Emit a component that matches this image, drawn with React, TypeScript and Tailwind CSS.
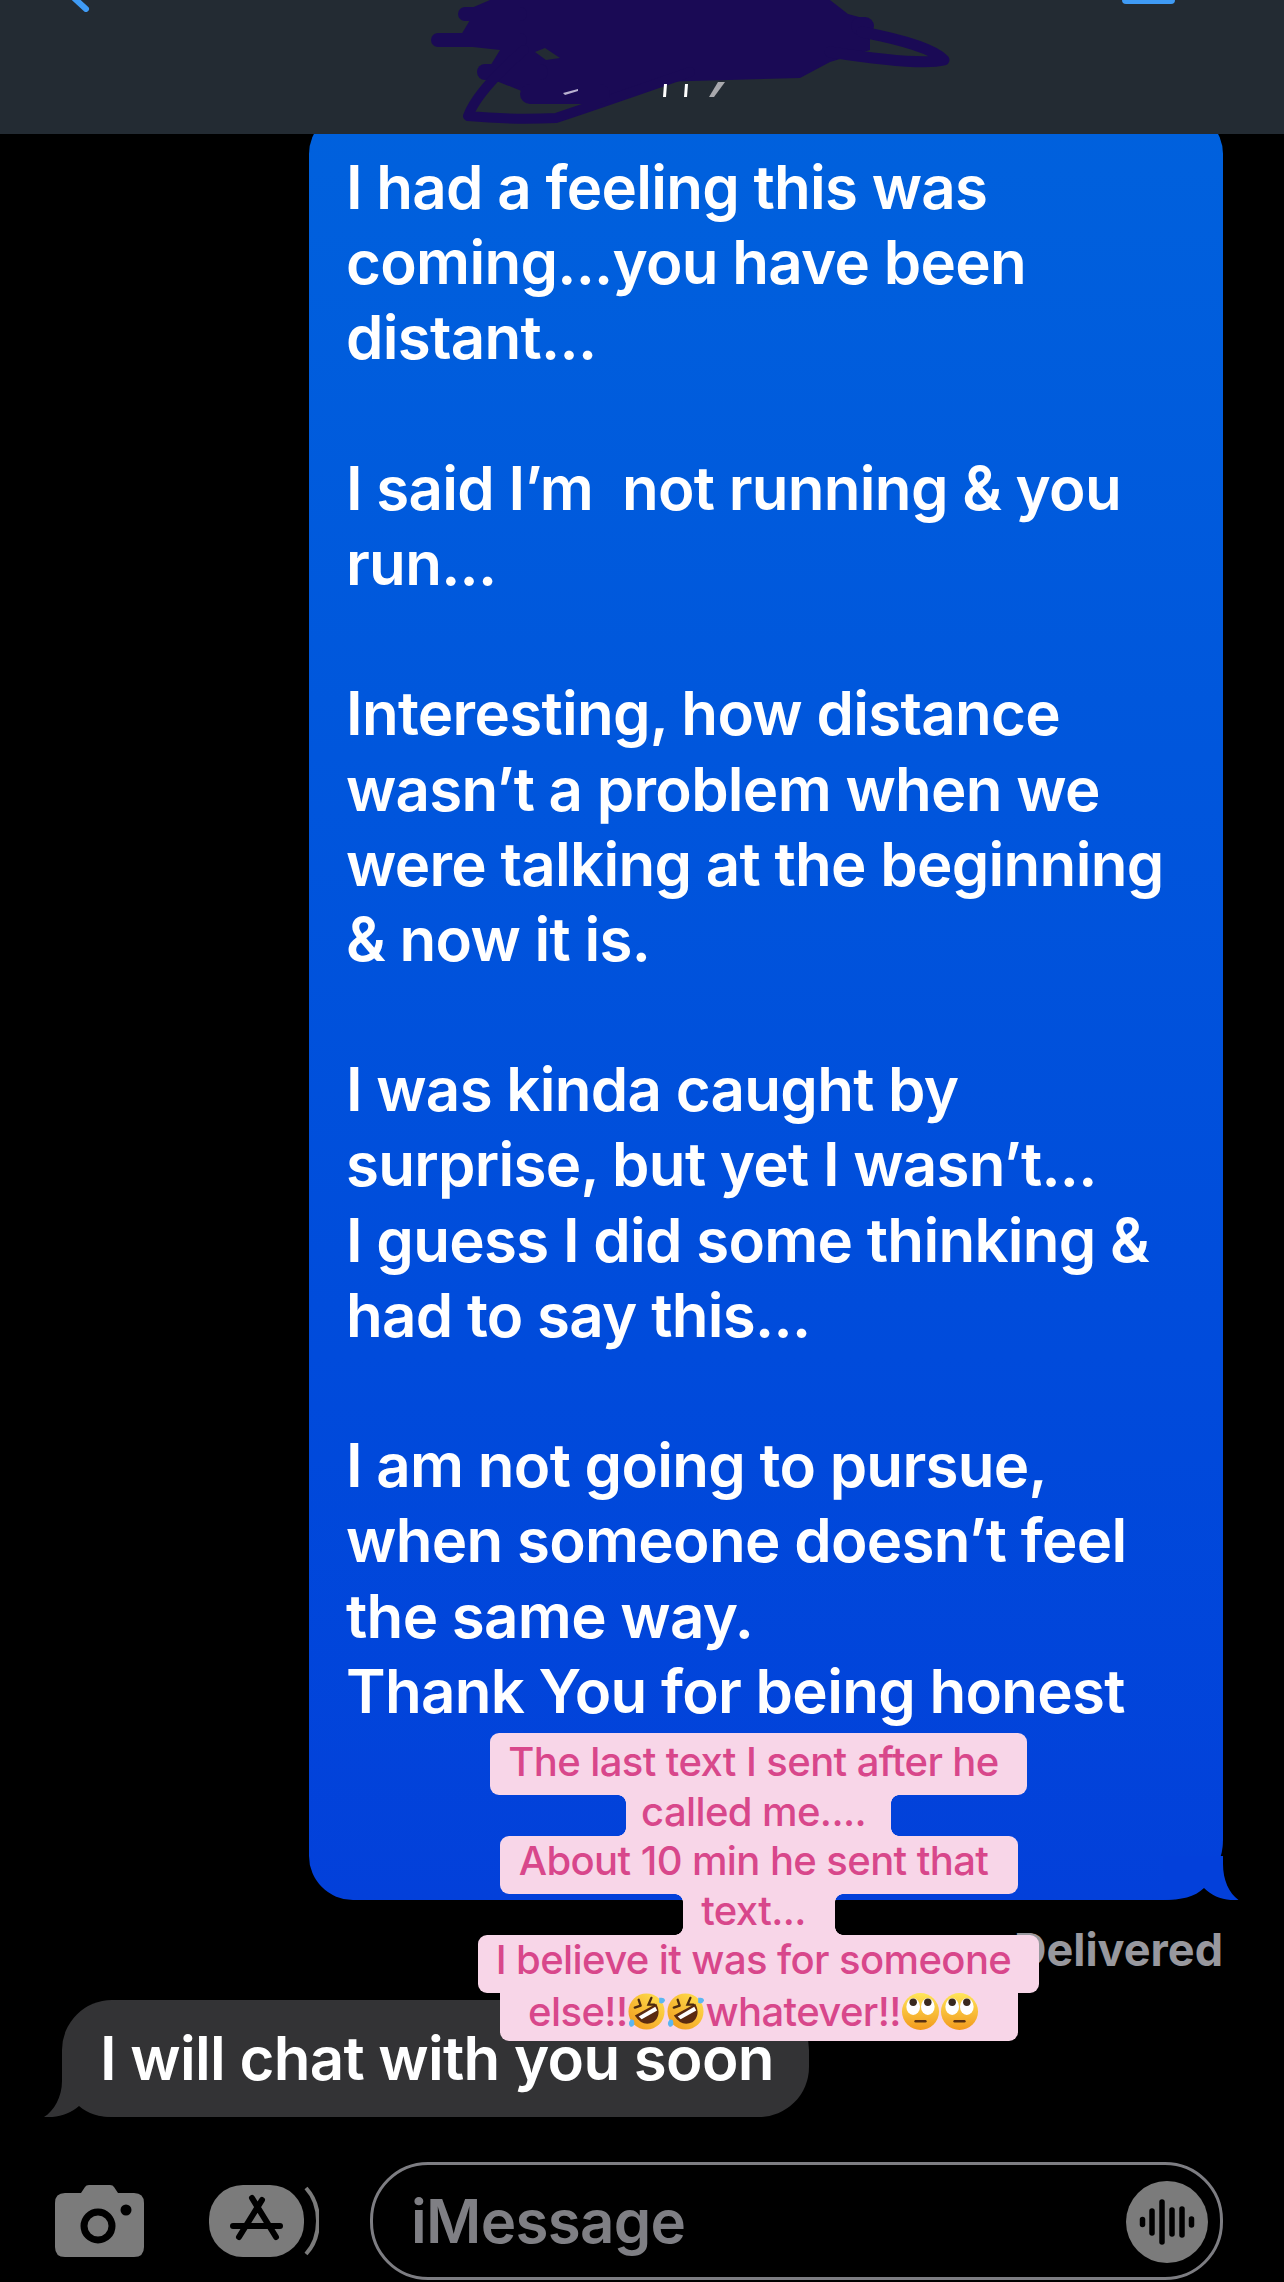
const BUBBLE_LINES = [
  "I had a feeling this was",
  "coming...you have been",
  "distant...",
  "",
  "I said I’m  not running & you",
  "run...",
  "",
  "Interesting, how distance",
  "wasn’t a problem when we",
  "were talking at the beginning",
  "& now it is.",
  "",
  "I was kinda caught by",
  "surprise, but yet I wasn’t...",
  "I guess I did some thinking &",
  "had to say this...",
  "",
  "I am not going to pursue,",
  "when someone doesn’t feel",
  "the same way.",
  "Thank You for being honest",
];

function Scribble() {
  return (
    <svg className="absolute left-[420px] top-0" width="540" height="134" viewBox="420 0 540 134" fill="none">
      <path d="M490 0 H830 L848 14 L870 20 V50 L830 62 L800 78 L655 82 L620 98 L560 100 L524 92 L484 76 L500 50 L455 45 L470 20 L462 12 Z" fill="#1a0a55" />
      <g stroke="#1a0a55" strokeLinecap="round" strokeLinejoin="round" fill="none">
        <path d="M438 40 H520" strokeWidth="14" />
        <path d="M465 14 H520" strokeWidth="14" />
        <path d="M485 72 H540" strokeWidth="16" />
        <path d="M860 26 H865" strokeWidth="18" />
        <path d="M524 50 Q478 90 468 116 Q510 120 556 118 Q610 100 690 72" strokeWidth="10" />
        <path d="M862 32 Q930 45 944 60 Q920 66 830 52" strokeWidth="11" />
        <path d="M530 94 H600" strokeWidth="20" />
      </g>
      <path d="M535 52 L546 60 L560 58 L545 48 Z" fill="#232b33" />
      <path d="M563 93 L578 89 L578 91 L565 95 Z" fill="#b9b2d0" />
      <path d="M664 84 h3 l-1 13 h-3 Z M685 84 h3 l-1 13 h-3 Z" fill="#ffffff" />
      <path d="M725 82 l-11 15 h-5 l9 -15 Z" fill="#a8a8ac" />
    </svg>
  );
}

function Rofl() {
  return (
    <svg width="39" height="39" viewBox="0 0 40 40" className="inline-block shrink-0">
      <defs>
        <linearGradient id="rofl" x1="0.9" y1="0" x2="0.1" y2="1">
          <stop offset="0" stopColor="#ffe04e" />
          <stop offset="1" stopColor="#f19a1c" />
        </linearGradient>
      </defs>
      <circle cx="20" cy="20" r="18.5" fill="url(#rofl)" />
      <path d="M8 24 L30 12 Q36 24 27 31 Q16 36 8 24 Z" fill="#5a2a10" />
      <path d="M12 25 L29 15 L31 19 L15 28 Z" fill="#ffffff" />
      <path d="M14 14 L8 16 M14 14 L12 8 M25 6 L22 13 L28 13" stroke="#4a2a10" strokeWidth="2.4" fill="none" strokeLinecap="round" />
      <path d="M4 28 q-4 5 0 8 q5 -1 3 -7 Z M33 6 q6 -1 6 3 q-2 4 -6 2 Z" fill="#5cb6f2" />
    </svg>
  );
}

function EyeRoll() {
  return (
    <svg width="39" height="39" viewBox="0 0 40 40" className="inline-block shrink-0">
      <defs>
        <linearGradient id="roll" x1="0" y1="0" x2="0" y2="1">
          <stop offset="0" stopColor="#ffe65a" />
          <stop offset="1" stopColor="#f2991c" />
        </linearGradient>
      </defs>
      <circle cx="20" cy="20" r="19" fill="url(#roll)" />
      <ellipse cx="12.5" cy="15" rx="7" ry="8.5" fill="#ffffff" />
      <ellipse cx="27.5" cy="15" rx="7" ry="8.5" fill="#ffffff" />
      <circle cx="12.5" cy="10.5" r="3.8" fill="#3a2a20" />
      <circle cx="27.5" cy="10.5" r="3.8" fill="#3a2a20" />
      <path d="M15 30 H25" stroke="#5a3010" strokeWidth="2.6" strokeLinecap="round" />
    </svg>
  );
}

function Notch({ side }: { side: "tl" | "tr" | "bl" | "br" }) {
  const cls =
    side === "tl"
      ? "absolute -left-[8px] top-0 w-[8px] h-[8px] bg-[radial-gradient(circle_at_0_100%,transparent_7.5px,#f8d6e8_8px)]"
      : side === "tr"
        ? "absolute -right-[8px] top-0 w-[8px] h-[8px] bg-[radial-gradient(circle_at_100%_100%,transparent_7.5px,#f8d6e8_8px)]"
        : side === "bl"
          ? "absolute -left-[8px] bottom-0 w-[8px] h-[8px] bg-[radial-gradient(circle_at_0_0,transparent_7.5px,#f8d6e8_8px)]"
          : "absolute -right-[8px] bottom-0 w-[8px] h-[8px] bg-[radial-gradient(circle_at_100%_0,transparent_7.5px,#f8d6e8_8px)]";
  return <span className={cls} />;
}

function PinkCaption() {
  return (
    <div className="absolute left-[478px] top-[1733px] w-[561px] flex flex-col items-center text-[#d8478b] text-[40px] leading-[49px] tracking-[-0.6px] font-medium whitespace-nowrap z-20">
      <div className="w-[537px] h-[62px] pt-[4px] pr-[10px] text-center bg-[#f8d6e8] rounded-[9px]">The last text I sent after he</div>
      <div className="relative w-[265px] h-[41px] pr-[10px] text-center bg-[#f8d6e8]">
        <Notch side="tl" /><Notch side="tr" /><Notch side="bl" /><Notch side="br" />
        <span className="relative -top-[8px]">called me....</span>
      </div>
      <div className="w-[518px] h-[58px] pr-[10px] text-center bg-[#f8d6e8] rounded-[9px]">About 10 min he sent that</div>
      <div className="relative w-[152px] h-[41px] pr-[10px] text-center bg-[#f8d6e8]">
        <Notch side="tl" /><Notch side="tr" /><Notch side="bl" /><Notch side="br" />
        <span className="relative -top-[8px]">text...</span>
      </div>
      <div className="w-[561px] h-[58px] pr-[10px] text-center bg-[#f8d6e8] rounded-[9px]">I believe it was for someone</div>
      <div className="w-[518px] h-[48px] pr-[10px] pb-[12px] bg-[#f8d6e8] rounded-b-[9px] flex justify-center items-center">
        <span>else!!</span>
        <Rofl />
        <Rofl />
        <span>whatever!!</span>
        <EyeRoll />
        <EyeRoll />
      </div>
    </div>
  );
}

export default function App() {
  return (
    <div className="relative w-[1284px] h-[2282px] bg-black overflow-hidden flex flex-col font-[Inter,sans-serif] text-white">
      <header className="relative z-10 h-[134px] shrink-0 bg-[#232b33]">
        <svg className="absolute left-[70px] top-0" width="24" height="12" viewBox="0 0 24 12">
          <path d="M12 -6 L4 -2 L16 9" stroke="#3f9bf5" strokeWidth="6" strokeLinecap="round" fill="none" />
        </svg>
        <div className="absolute left-[1122px] top-0 w-[53px] h-[4px] bg-[#3f9bf5] rounded-b-[4px]" />
        <Scribble />
      </header>

      <div className="relative ml-[309px] w-[914px] -mt-[24px] pt-[40px] pb-[171px] pl-[37px] rounded-[44px] rounded-br-[60px] bg-gradient-to-b from-[#0061dd] to-[#0340da] text-[60px] leading-[75.2px] tracking-[-0.7px] font-semibold whitespace-pre">
        {BUBBLE_LINES.map((line, i) => (
          <div key={i} className="h-[75.2px]">{line}</div>
        ))}
        <svg className="absolute right-[-16px] bottom-0" width="76" height="44" viewBox="0 0 76 44">
          <path d="M60 0 V8 C60 24 66 37 75.5 44 C62 45 50 41 41 32 C32 41 18 44 0 44 L0 0 Z" fill="#0340da" />
        </svg>
      </div>

      <div className="mt-[26px] mr-[61px] text-right text-[#98989e] text-[45px] leading-[48px] font-bold">Delivered</div>

      <div className="relative ml-[62px] mt-[26px] w-[747px] h-[117px] rounded-[50px] bg-[#333335] pl-[38px] text-[60px] leading-[117px] tracking-[-0.7px] font-semibold">
        <svg className="absolute left-[-18px] bottom-0" width="70" height="50" viewBox="0 0 70 50">
          <path d="M18 0 V14 C18 30 10 44 0 50 C14 51 26 47 35 39 C44 47 55 50 70 50 V0 Z" fill="#333335" />
        </svg>
        <span className="relative">I will chat with you soon</span>
      </div>

      <div className="mt-[45px] flex items-center pl-[55px] pr-[61px]">
        <svg width="89" height="72" viewBox="0 0 89 72" className="shrink-0">
          <path d="M10 8 H26 L30 2 Q31 0 34 0 H55 Q58 0 59 2 L63 8 H79 Q89 8 89 18 V62 Q89 72 79 72 H10 Q0 72 0 62 V18 Q0 8 10 8 Z" fill="#7b7b7b" />
          <circle cx="43" cy="41" r="14" fill="none" stroke="#000" strokeWidth="7" />
          <circle cx="71" cy="25" r="5.5" fill="#000" />
        </svg>
        <svg width="110" height="72" viewBox="0 0 110 72" className="ml-[65px] shrink-0">
          <rect x="0" y="0" width="95" height="72" rx="34" fill="#7b7b7b" />
          <path d="M97 3 Q109 16 109 36 Q109 56 97 69" fill="none" stroke="#7b7b7b" strokeWidth="4" />
          <path d="M43 13 L67 52 M53 15 L30 52" stroke="#000" strokeWidth="6" strokeLinecap="round" fill="none" />
          <path d="M24 41 H71" stroke="#000" strokeWidth="6" strokeLinecap="round" />
        </svg>
        <div className="relative ml-[51px] flex-1 h-[118px] rounded-[58px] border-[3px] border-[#7d7d82] pl-[38px] text-[#7f7f84] text-[60px] leading-[112px] font-semibold tracking-[-0.7px]">
          iMessage
          <svg className="absolute right-[12px] top-[16px]" width="82" height="82" viewBox="0 0 82 82">
            <circle cx="41" cy="41" r="41" fill="#7b7b7b" />
            <g stroke="#000" strokeWidth="5.5" strokeLinecap="round">
              <path d="M16.5 38.5 V43.5" />
              <path d="M26 30 V52" />
              <path d="M36 21 V61" />
              <path d="M46 29 V53" />
              <path d="M56 28 V54" />
              <path d="M65.5 38 V44" />
            </g>
          </svg>
        </div>
      </div>

      <PinkCaption />
    </div>
  );
}
